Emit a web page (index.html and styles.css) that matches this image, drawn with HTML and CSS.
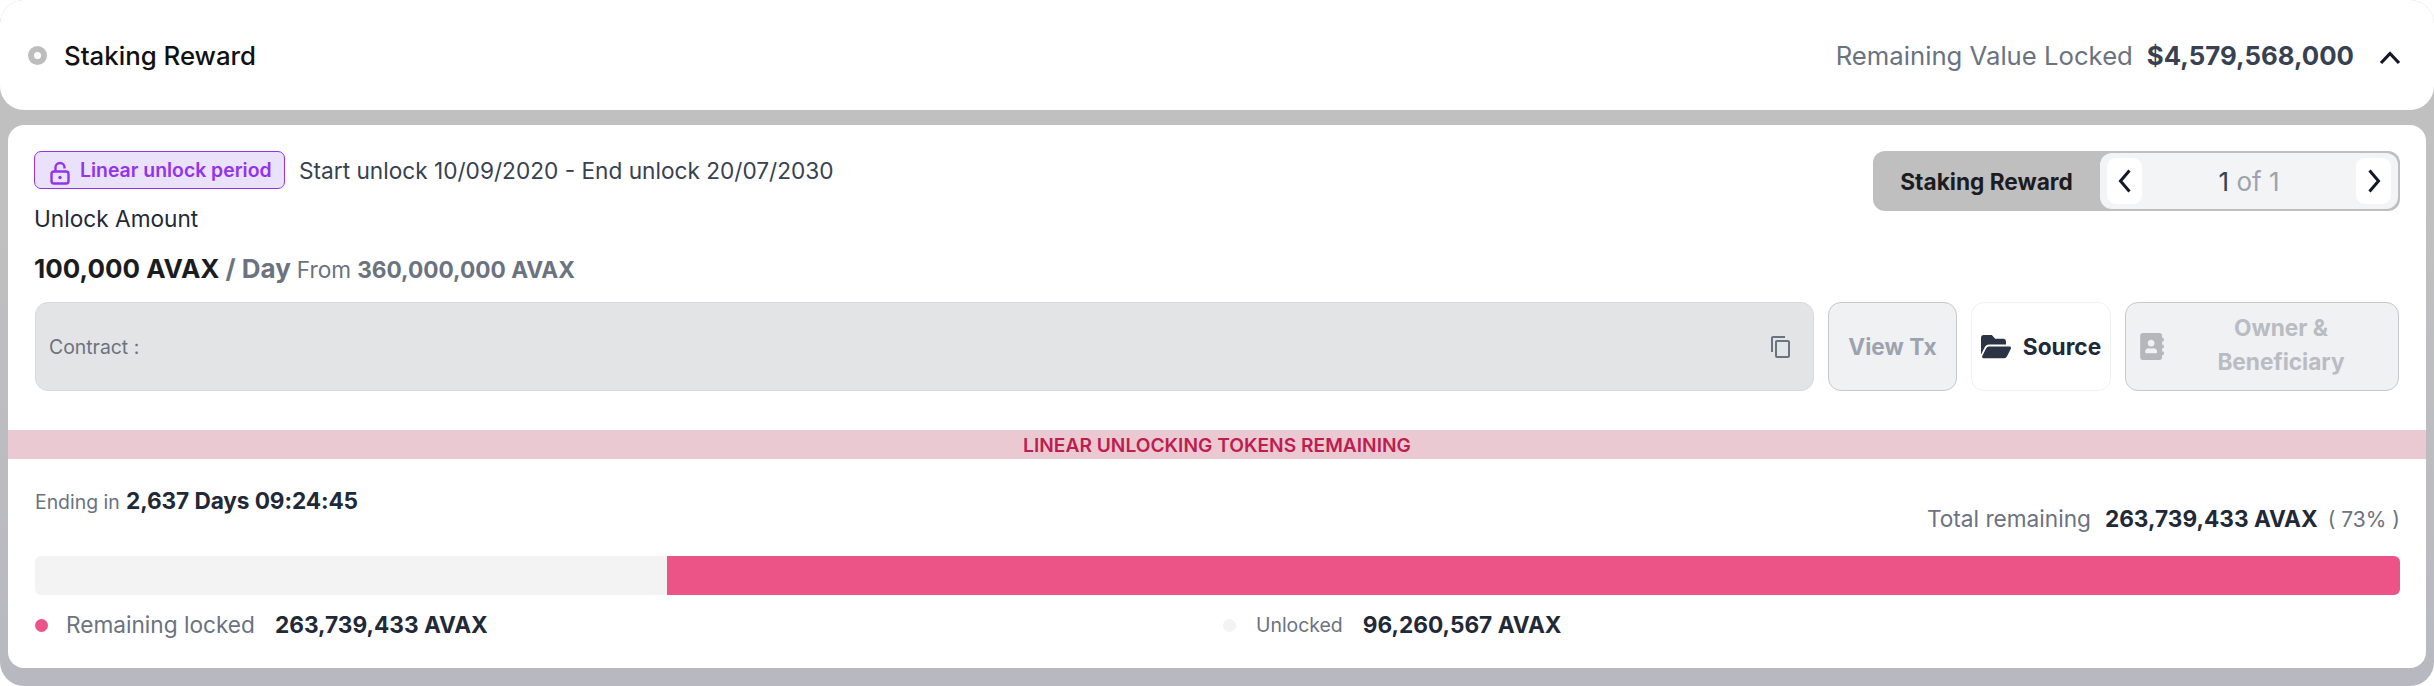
FILE: index.html
```html
<!DOCTYPE html>
<html lang="en">
<head>
    <meta charset="UTF-8">
    <title>Staking Reward</title>
    <link rel="stylesheet" href="styles.css">
</head>
<body>
    <div class="panel">
        <header class="panel-head">
            <div class="head-left">
                <span class="ring"></span>
                <span class="head-title">Staking Reward</span>
            </div>
            <div class="head-right">
                <span class="head-label">Remaining Value Locked</span>
                <span class="head-value">$4,579,568,000</span>
                <svg class="chevron-up" viewBox="0 0 24 24"><path d="M3 17 L12 7.5 L21 17"/></svg>
            </div>
        </header>

        <section class="detail">
            <div class="info">
                <div class="info-left">
                    <div class="period-row">
                        <span class="badge">
                            <svg class="lock" viewBox="0 0 20 24"><path d="M5.5 10.5V6.5a4.5 4.5 0 0 1 9 0V7.5"/><rect x="1.5" y="10.5" width="17" height="12" rx="2.5"/><circle class="lock-dot" cx="10" cy="16.5" r="1.7"/></svg>
                            Linear unlock period
                        </span>
                        <span class="period-text">Start unlock 10/09/2020 - End unlock 20/07/2030</span>
                    </div>
                    <div class="amount-label">Unlock Amount</div>
                    <div class="amount-row">
                        <span class="amount">100,000 AVAX</span>
                        <span class="per-day">/ Day</span>
                        <span class="from">From</span>
                        <span class="from-value">360,000,000 AVAX</span>
                    </div>
                </div>
                <div class="pager">
                    <div class="pager-name">Staking Reward</div>
                    <div class="pager-nav">
                        <button class="page-btn"><svg viewBox="0 0 24 24"><path d="M16.5 1.5 L7.5 12 L16.5 22.5"/></svg></button>
                        <span class="page-count">1 <span class="page-of">of 1</span></span>
                        <button class="page-btn"><svg viewBox="0 0 24 24"><path d="M7.5 1.5 L16.5 12 L7.5 22.5"/></svg></button>
                    </div>
                </div>
            </div>

            <div class="actions">
                <div class="contract">
                    <span class="contract-label">Contract :</span>
                    <svg class="copy" viewBox="0 0 24 24"><path d="M16 1H4c-1.1 0-2 .9-2 2v14h2V3h12V1zm3 4H8c-1.1 0-2 .9-2 2v14c0 1.1.9 2 2 2h11c1.1 0 2-.9 2-2V7c0-1.1-.9-2-2-2zm0 16H8V7h11v14z"/></svg>
                </div>
                <button class="act act-off view-tx">View Tx</button>
                <button class="act source">
                    <svg class="folder" viewBox="0 0 576 512" preserveAspectRatio="none"><path d="M572.694 292.093L500.27 416.248A63.997 63.997 0 0 1 444.989 448H45.025c-18.523 0-30.064-20.093-20.731-36.093l72.424-124.155A64 64 0 0 1 152 256h399.964c18.523 0 30.064 20.093 20.73 36.093zM152 224h328v-48c0-26.51-21.49-48-48-48H272l-64-64H48C21.49 64 0 85.49 0 112v278.046l69.077-118.418C86.214 242.25 117.989 224 152 224z"/></svg>
                    Source
                </button>
                <button class="act act-off owner">
                    <svg class="book" viewBox="0 0 448 512"><path d="M436 160c6.6 0 12-5.4 12-12v-40c0-6.6-5.4-12-12-12h-20V48c0-26.5-21.5-48-48-48H48C21.5 0 0 21.5 0 48v416c0 26.5 21.5 48 48 48h320c26.5 0 48-21.5 48-48v-48h20c6.6 0 12-5.4 12-12v-40c0-6.6-5.4-12-12-12h-20v-64h20c6.6 0 12-5.4 12-12v-40c0-6.6-5.4-12-12-12h-20v-64h20zm-228-32c35.3 0 64 28.7 64 64s-28.7 64-64 64-64-28.7-64-64 28.7-64 64-64zm112 236.8c0 10.6-10 19.2-22.4 19.2H118.4C106 384 96 375.4 96 364.8v-19.2c0-31.8 30.1-57.6 67.2-57.6h5c12.3 5.1 25.7 8 39.8 8s27.6-2.9 39.8-8h5c37.1 0 67.2 25.8 67.2 57.6v19.2z"/></svg>
                    <span class="owner-text">Owner &amp; Beneficiary</span>
                </button>
            </div>

            <div class="band">LINEAR UNLOCKING TOKENS REMAINING</div>

            <div class="progress-area">
                <div class="stats">
                    <div class="ending"><span class="ending-label">Ending in</span> <b class="countdown">2,637 Days 09:24:45</b></div>
                    <div class="total"><span class="total-label">Total remaining</span><b class="total-value">263,739,433 AVAX</b><span class="total-pct">( 73% )</span></div>
                </div>
                <div class="bar">
                    <div class="bar-fill" style="width: 73.26%"></div>
                </div>
                <div class="legend">
                    <div class="legend-item locked">
                        <span class="dot dot-pink"></span>
                        <span class="legend-label">Remaining locked</span>
                        <b>263,739,433 AVAX</b>
                    </div>
                    <div class="legend-item unlocked">
                        <span class="dot dot-grey"></span>
                        <span class="legend-label small">Unlocked</span>
                        <b>96,260,567 AVAX</b>
                    </div>
                </div>
            </div>
        </section>
    </div>
</body>
</html>
```

FILE: styles.css
```css
* {
    box-sizing: border-box;
}
body {
    margin: 0;
    font-family: 'Inter', sans-serif;
    background-color: #ffffff;
}
button {
    font-family: inherit;
    cursor: pointer;
}
.panel {
    height: 686px;
    border-radius: 24px;
    background: linear-gradient(#c0c0c0, #c0c0c0 30%, #b8b9c0);
    display: flex;
    flex-direction: column;
}
.panel-head {
    height: 110px;
    background-color: #ffffff;
    border-radius: 24px;
    padding: 0 32px 0 28px;
    display: flex;
    align-items: center;
    justify-content: space-between;
}
.head-left, .head-right {
    display: flex;
    align-items: center;
}
.ring {
    width: 19px;
    height: 19px;
    border-radius: 50%;
    border: 6px solid #bdbdbd;
    margin-right: 17px;
}
.head-title {
    font-size: 25.8px;
    font-weight: 450;
    color: #111111;
}
.head-label {
    font-size: 25.7px;
    color: #6b7280;
}
.head-value {
    font-size: 25.8px;
    font-weight: 700;
    color: #374151;
    margin-left: 14px;
}
.chevron-up {
    width: 24px;
    height: 24px;
    margin: 6px 0 0 24px;
    fill: none;
    stroke: #111827;
    stroke-width: 3.2;
}
.detail {
    margin: 15px 8px 18px;
    flex: 1;
    background-color: #ffffff;
    border-radius: 16px;
    display: flex;
    flex-direction: column;
}
.info {
    height: 177px;
    padding: 26px 26px 0 26px;
    display: flex;
    justify-content: space-between;
    align-items: flex-start;
}
.period-row {
    display: flex;
    align-items: center;
}
.badge {
    height: 38px;
    width: 251px;
    border: 1.5px solid #9333ea;
    border-radius: 7px;
    background-color: #e9e2fa;
    color: #9333ea;
    font-size: 19.4px;
    font-weight: 600;
    display: flex;
    align-items: center;
    gap: 10px;
    padding-left: 15px;
}
.lock {
    width: 20px;
    height: 24px;
    margin-top: 5px;
    fill: none;
    stroke: #9333ea;
    stroke-width: 2.4;
}
.lock-dot {
    fill: #9333ea;
    stroke: none;
}
.period-text {
    margin-left: 14px;
    font-size: 22.65px;
    color: #374151;
}
.amount-label {
    margin-top: 15px;
    font-size: 22.65px;
    line-height: 30px;
    color: #1f2937;
}
.amount-row {
    margin-top: 20px;
    line-height: 30px;
    display: flex;
    align-items: baseline;
}
.amount {
    font-size: 26px;
    font-weight: 700;
    color: #1c1c1f;
}
.per-day {
    font-size: 26px;
    font-weight: 700;
    color: #6b7280;
    margin-left: 6px;
}
.from {
    font-size: 22.65px;
    color: #6b7280;
    margin-left: 6px;
}
.from-value {
    font-size: 22.65px;
    font-weight: 700;
    color: #6b7280;
    margin-left: 6px;
}
.pager {
    width: 527px;
    height: 60px;
    border-radius: 12px;
    background-color: #bfbfbf;
    display: flex;
}
.pager-name {
    width: 227px;
    display: flex;
    align-items: center;
    justify-content: center;
    font-size: 22.65px;
    font-weight: 700;
    color: #1c1c1f;
}
.pager-nav {
    flex: 1;
    margin: 2px 2px 2px 0;
    border-radius: 12px;
    background-color: #f3f4f6;
    display: flex;
    align-items: center;
    justify-content: space-between;
    padding: 0 6px;
}
.page-btn {
    width: 37px;
    height: 48px;
    border: 1px solid #f3f4f6;
    border-radius: 10px;
    background-color: #ffffff;
    padding: 0;
    display: flex;
    align-items: center;
    justify-content: center;
}
.page-btn svg {
    width: 24px;
    height: 24px;
    fill: none;
    stroke: #111827;
    stroke-width: 3;
}
.page-count {
    font-size: 26px;
    color: #374151;
}
.page-of {
    color: #9ca3af;
}
.actions {
    padding: 0 27px;
    display: flex;
    gap: 14px;
    height: 89px;
}
.contract {
    flex: 1;
    background-color: #e3e4e6;
    border: 1px solid #d8d9dc;
    border-radius: 13px;
    padding: 0 20px 0 13px;
    display: flex;
    align-items: center;
    justify-content: space-between;
}
.contract-label {
    font-size: 19.4px;
    color: #6b7280;
}
.copy {
    width: 24px;
    height: 24px;
    fill: #6b7280;
}
.act {
    height: 89px;
    border-radius: 13px;
    font-size: 22.65px;
    font-weight: 700;
    display: flex;
    align-items: center;
    justify-content: center;
    padding: 0;
}
.act-off {
    background-color: #f0f1f3;
    border: 1px solid #c6c8cc;
    color: #9ca3af;
}
.view-tx {
    width: 129px;
}
.source {
    width: 140px;
    gap: 12px;
    background-color: #ffffff;
    border: 1px solid #f0f1f3;
    color: #1f2937;
}
.folder {
    width: 30px;
    height: 31px;
    fill: #2b3445;
}
.owner {
    width: 274px;
    color: #b9bcc2;
    padding-left: 14px;
}
.book {
    width: 24px;
    height: 27px;
    fill: #b5b7bc;
    flex-shrink: 0;
}
.owner-text {
    flex: 1;
    line-height: 34px;
    padding: 0 24px 3px;
}
.band {
    margin-top: 39px;
    height: 29px;
    background-color: #ebc9d3;
    color: #be1e4f;
    font-size: 19.2px;
    font-weight: 600;
    display: flex;
    align-items: center;
    justify-content: center;
}
.progress-area {
    padding: 0 26px 0 27px;
}
.stats {
    display: flex;
    justify-content: space-between;
    height: 97px;
    padding-top: 28px;
}
.ending {
    font-size: 22.65px;
    line-height: 28px;
    color: #1f2937;
}
.countdown {
    letter-spacing: -0.1px;
}
.ending-label {
    font-size: 19.4px;
    font-weight: 400;
    color: #6b7280;
}
.total {
    margin-top: 18px;
    font-size: 22.65px;
    line-height: 28px;
    color: #1f2937;
}
.total-label {
    color: #6b7280;
}
.total-value {
    margin-left: 14px;
}
.total-pct {
    margin-left: 10px;
    font-size: 21px;
    color: #6b7280;
}
.bar {
    height: 39px;
    border-radius: 6px;
    background-color: #f3f3f3;
    display: flex;
    justify-content: flex-end;
}
.bar-fill {
    background-color: #ec5387;
    border-radius: 0 6px 6px 0;
}
.legend {
    margin-top: 16px;
    display: flex;
}
.legend-item {
    display: flex;
    align-items: center;
    font-size: 22.65px;
    line-height: 28px;
    color: #1f2937;
}
.locked {
    width: 1188px;
}
.dot {
    width: 13px;
    height: 13px;
    border-radius: 50%;
    margin-right: 18px;
}
.dot-pink {
    background-color: #ec5387;
}
.dot-grey {
    background-color: #f3f3f3;
    margin-right: 20px;
}
.legend-label {
    color: #6b7280;
    margin-right: 20px;
}
.legend-label.small {
    font-size: 19.4px;
}
```
